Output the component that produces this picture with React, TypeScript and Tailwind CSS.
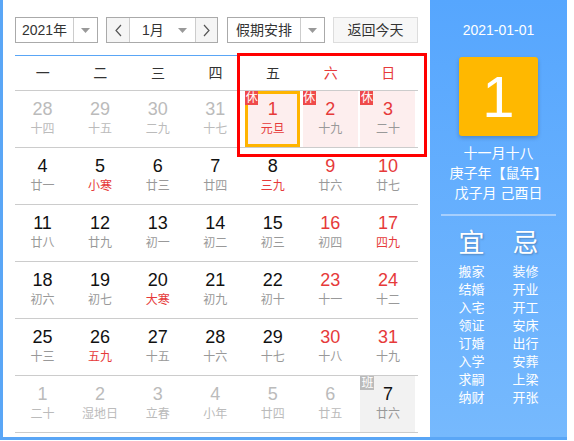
import React from "react";

type Cell = { d: number; l: string; o?: boolean; red?: boolean; lr?: boolean; hol?: boolean; sel?: boolean; work?: boolean };

const rows: Cell[][] = [
  [
    { d: 28, l: "十四", o: true },
    { d: 29, l: "十五", o: true },
    { d: 30, l: "二九", o: true },
    { d: 31, l: "十七", o: true },
    { d: 1, l: "元旦", red: true, lr: true, hol: true, sel: true },
    { d: 2, l: "十九", red: true, hol: true },
    { d: 3, l: "二十", red: true, hol: true },
  ],
  [
    { d: 4, l: "廿一" },
    { d: 5, l: "小寒", lr: true },
    { d: 6, l: "廿三" },
    { d: 7, l: "廿四" },
    { d: 8, l: "三九", lr: true },
    { d: 9, l: "廿六", red: true },
    { d: 10, l: "廿七", red: true },
  ],
  [
    { d: 11, l: "廿八" },
    { d: 12, l: "廿九" },
    { d: 13, l: "初一" },
    { d: 14, l: "初二" },
    { d: 15, l: "初三" },
    { d: 16, l: "初四", red: true },
    { d: 17, l: "四九", red: true, lr: true },
  ],
  [
    { d: 18, l: "初六" },
    { d: 19, l: "初七" },
    { d: 20, l: "大寒", lr: true },
    { d: 21, l: "初九" },
    { d: 22, l: "初十" },
    { d: 23, l: "十一", red: true },
    { d: 24, l: "十二", red: true },
  ],
  [
    { d: 25, l: "十三" },
    { d: 26, l: "五九", lr: true },
    { d: 27, l: "十五" },
    { d: 28, l: "十六" },
    { d: 29, l: "十七" },
    { d: 30, l: "十八", red: true },
    { d: 31, l: "十九", red: true },
  ],
  [
    { d: 1, l: "二十", o: true },
    { d: 2, l: "湿地日", o: true },
    { d: 3, l: "立春", o: true },
    { d: 4, l: "小年", o: true },
    { d: 5, l: "廿四", o: true },
    { d: 6, l: "廿五", o: true },
    { d: 7, l: "廿六", work: true },
  ],
];

const weekdays = ["一", "二", "三", "四", "五", "六", "日"];
const yi = ["搬家", "结婚", "入宅", "领证", "订婚", "入学", "求嗣", "纳财"];
const ji = ["装修", "开业", "开工", "安床", "出行", "安葬", "上梁", "开张"];

function Caret() {
  return (
    <svg width="9" height="5" viewBox="0 0 9 5">
      <path d="M0 0 L9 0 L4.5 5 Z" fill="#999" />
    </svg>
  );
}

function Chevron({ dir }: { dir: "l" | "r" }) {
  return (
    <svg width="7" height="13" viewBox="0 0 7 13">
      <polyline
        points={dir === "l" ? "6,1 1,6.5 6,12" : "1,1 6,6.5 1,12"}
        fill="none"
        stroke="#555"
        strokeWidth="1.2"
      />
    </svg>
  );
}

function DayCell({ c }: { c: Cell }) {
  let bg = "";
  if (c.hol) bg = "bg-[#fdeeee]";
  if (c.work) bg = "bg-[#f2f2f2]";
  const numColor = c.o ? "text-[#bbbbbb]" : c.red ? "text-[#e63a3a]" : "text-[#111]";
  const lunColor = c.o ? "text-[#bbbbbb]" : c.lr ? "text-[#e63a3a]" : "text-[#999]";
  return (
    <div className="h-[57px] border-b border-[#cccccc]">
      <div className={`relative w-[55px] h-[56px] flex flex-col items-center pt-[7px] ${bg}`}>
        {c.sel && <div className="absolute inset-0 border-[3px] border-[#ffb400]" />}
        {c.hol && (
          <div className="absolute left-0 top-0 w-[13px] h-[14px] bg-[#ef4a4a] text-white text-[12px] leading-[14px] text-center">
            休
          </div>
        )}
        {c.work && (
          <div className="absolute left-0 top-0 w-[14px] h-[14px] bg-[#bbbbbb] text-white text-[12px] leading-[14px] text-center">
            班
          </div>
        )}
        <div className={`relative text-[18px] leading-[22px] ${numColor}`}>{c.d}</div>
        <div className={`relative mt-[1px] text-[12px] leading-[16px] whitespace-nowrap ${lunColor}`}>{c.l}</div>
      </div>
    </div>
  );
}

export default function App() {
  return (
    <div
      className="relative w-[574px] h-[441px] bg-white overflow-hidden"
      style={{ fontFamily: "'Liberation Sans','Noto Sans CJK SC',sans-serif" }}
    >
      <div className="flex w-[567px] h-[440px] border-l-[3px] border-b-[3px] border-[#5aa6f6] box-border">
        {/* Left */}
        <div className="w-[427px] pl-[12px] pt-[17px] overflow-hidden">
          {/* toolbar */}
          <div className="flex items-center h-[26px] text-[14px] text-[#333]">
            <div className="flex h-[26px] w-[83px] border border-[#aaaaaa] box-border">
              <div className="w-[57px] flex items-center justify-center">2021年</div>
              <div className="flex-1 border-l border-[#cccccc] flex items-center justify-center">
                <Caret />
              </div>
            </div>
            <div className="ml-[8px] flex h-[26px] w-[112px] border border-[#aaaaaa] box-border">
              <div className="w-[23px] bg-[#f5f5f5] flex items-center justify-center border-r border-[#cccccc]">
                <Chevron dir="l" />
              </div>
              <div className="w-[65px] flex items-center">
                <span className="ml-[12px]">1月</span>
                <span className="ml-auto mr-[8px] flex">
                  <Caret />
                </span>
              </div>
              <div className="flex-1 bg-[#f5f5f5] flex items-center justify-center border-l border-[#cccccc]">
                <Chevron dir="r" />
              </div>
            </div>
            <div className="ml-[9px] flex h-[26px] w-[98px] border border-[#aaaaaa] box-border">
              <div className="w-[72px] flex items-center justify-center">假期安排</div>
              <div className="flex-1 border-l border-[#cccccc] flex items-center justify-center">
                <Caret />
              </div>
            </div>
            <div className="ml-[8px] h-[26px] w-[85px] border border-[#dddddd] bg-[#f7f7f7] box-border flex items-center justify-center">
              返回今天
            </div>
          </div>

          {/* calendar */}
          <div className="mt-[12px] w-[403px] border-t border-[#5aa6f6]">
            <div className="grid grid-cols-7 h-[35px] border-b border-[#cccccc] text-[14px]">
              {weekdays.map((w, i) => (
                <div
                  key={w}
                  className={`flex items-center justify-center pr-[2px] ${i >= 5 ? "text-[#e63a3a]" : "text-[#333]"}`}
                >
                  {w}
                </div>
              ))}
            </div>
            {rows.map((r, ri) => (
              <div key={ri} className="grid grid-cols-7">
                {r.map((c, ci) => (
                  <DayCell key={ci} c={c} />
                ))}
              </div>
            ))}
          </div>
        </div>

        {/* Right panel */}
        <div className="w-[137px] h-full bg-gradient-to-b from-[#56a6fe] to-[#76b9fd] text-white flex flex-col items-center">
          <div className="mt-[21px] text-[14px] leading-[18px]">2021-01-01</div>
          <div className="mt-[18px] w-[79px] h-[79px] rounded-[3px] bg-[#ffb800] shadow-[0_2px_4px_rgba(0,0,0,0.2)] flex items-center justify-center text-[58px] leading-none">
            1
          </div>
          <div className="mt-[7px] text-[14px] leading-[20px] text-center">
            <div>十一月十八</div>
            <div>庚子年【鼠年】</div>
            <div>戊子月 己酉日</div>
          </div>
          <div className="mt-[11px] w-[115px] h-[2px] bg-[#a6cffd]" />
          <div className="mt-[12px] flex w-[100px] justify-between px-[1px]">
            <div className="flex flex-col items-center w-[44px]">
              <div className="text-[26px] leading-[30px] [text-shadow:1px_1px_2px_rgba(0,0,0,0.25)]">宜</div>
              <div className="mt-[5px] text-[13px] leading-[18px] flex flex-col items-center">
                {yi.map((t) => (
                  <div key={t}>{t}</div>
                ))}
              </div>
            </div>
            <div className="flex flex-col items-center w-[44px]">
              <div className="text-[26px] leading-[30px] [text-shadow:1px_1px_2px_rgba(0,0,0,0.25)]">忌</div>
              <div className="mt-[5px] text-[13px] leading-[18px] flex flex-col items-center">
                {ji.map((t) => (
                  <div key={t}>{t}</div>
                ))}
              </div>
            </div>
          </div>
        </div>
      </div>

      {/* red highlight box */}
      <div className="absolute left-[237px] top-[53px] w-[190px] h-[104px] border-[3px] border-[#ff0000] pointer-events-none" />
    </div>
  );
}
